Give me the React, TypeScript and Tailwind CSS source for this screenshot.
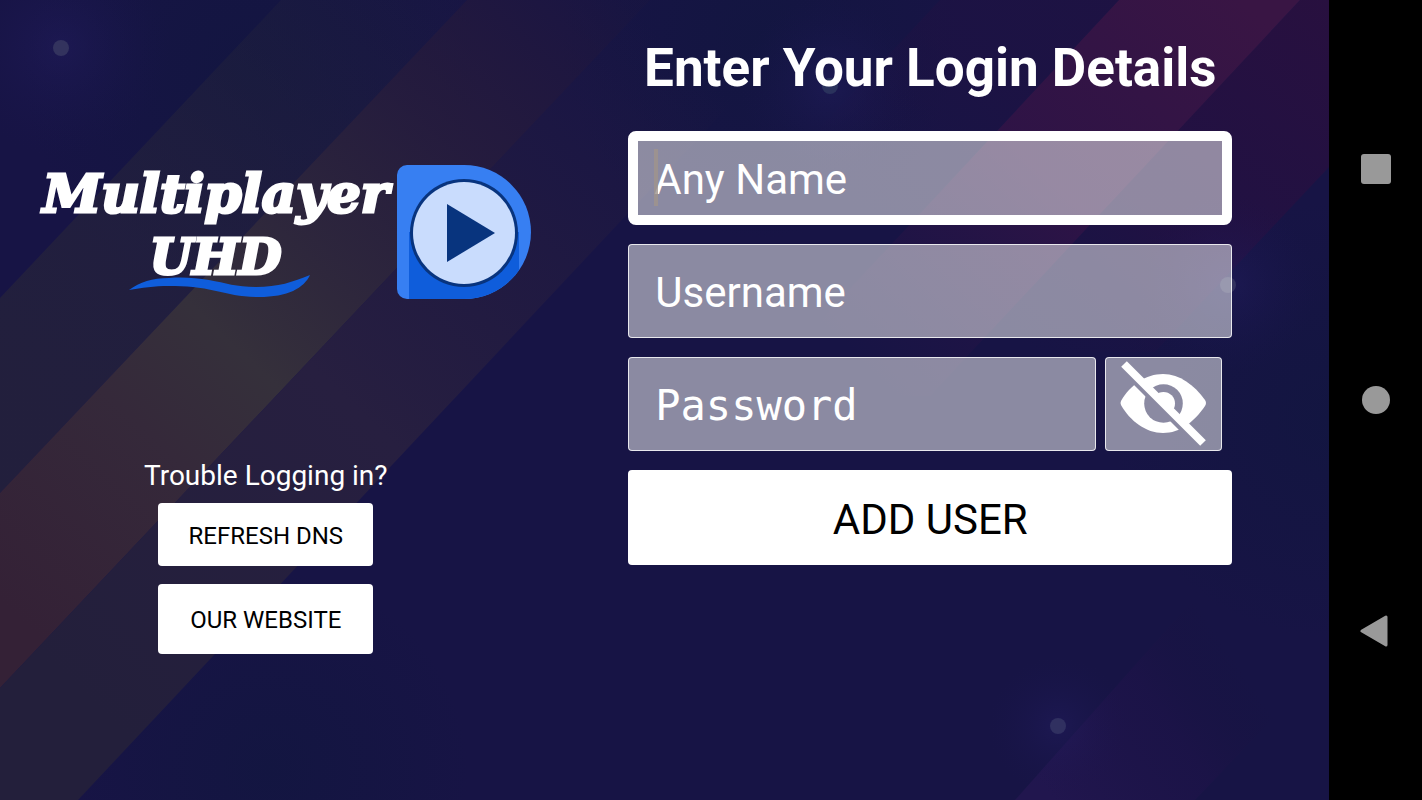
import React from "react";

const fieldClass =
  "block h-[94px] w-full rounded-[4px] border border-white/80 bg-white/50 px-[26px] pt-[3px] text-[42px] text-white outline-none placeholder:text-white placeholder:opacity-100";

function Backdrop() {
  return (
    <svg
      className="absolute inset-0 h-full w-full"
      viewBox="0 0 1329 800"
      preserveAspectRatio="none"
      aria-hidden="true"
    >
      <defs>
        <linearGradient id="outerLeft" gradientUnits="userSpaceOnUse" x1="470" y1="-60" x2="40" y2="420">
          <stop offset="0" stopColor="#2a2a38" stopOpacity="0" />
          <stop offset="0.5" stopColor="#2a2839" stopOpacity="0.4" />
          <stop offset="1" stopColor="#24213b" stopOpacity="0.85" />
        </linearGradient>
        <linearGradient id="core" gradientUnits="userSpaceOnUse" x1="590" y1="-30" x2="0" y2="600">
          <stop offset="0" stopColor="#2c1a35" stopOpacity="0.1" />
          <stop offset="0.25" stopColor="#281d3c" stopOpacity="0.8" />
          <stop offset="0.6" stopColor="#35303b" />
          <stop offset="0.74" stopColor="#35293a" />
          <stop offset="1" stopColor="#342136" />
        </linearGradient>
        <linearGradient id="outerRight" gradientUnits="userSpaceOnUse" x1="720" y1="90" x2="120" y2="730">
          <stop offset="0" stopColor="#241c40" stopOpacity="0" />
          <stop offset="0.3" stopColor="#241c40" stopOpacity="0.7" />
          <stop offset="0.55" stopColor="#271f40" />
          <stop offset="1" stopColor="#231f3b" />
        </linearGradient>
        <linearGradient id="magenta" gradientUnits="userSpaceOnUse" x1="1230" y1="-10" x2="870" y2="370">
          <stop offset="0" stopColor="#391544" />
          <stop offset="0.5" stopColor="#341346" stopOpacity="0.8" />
          <stop offset="1" stopColor="#2a1447" stopOpacity="0" />
        </linearGradient>
        <linearGradient id="plum" gradientUnits="userSpaceOnUse" x1="1329" y1="0" x2="1040" y2="360">
          <stop offset="0" stopColor="#28103f" />
          <stop offset="0.6" stopColor="#241042" stopOpacity="0.7" />
          <stop offset="1" stopColor="#1c1344" stopOpacity="0" />
        </linearGradient>
        <linearGradient id="violet" gradientUnits="userSpaceOnUse" x1="1040" y1="780" x2="1230" y2="650">
          <stop offset="0" stopColor="#21164e" />
          <stop offset="0.6" stopColor="#1e1349" stopOpacity="0.6" />
          <stop offset="1" stopColor="#18123f" stopOpacity="0" />
        </linearGradient>
        <radialGradient id="glow">
          <stop offset="0" stopColor="#27206a" stopOpacity="0.35" />
          <stop offset="1" stopColor="#1b1550" stopOpacity="0" />
        </radialGradient>
        <radialGradient id="deep">
          <stop offset="0" stopColor="#121640" stopOpacity="0.8" />
          <stop offset="1" stopColor="#121640" stopOpacity="0" />
        </radialGradient>
      </defs>
      <rect width="1329" height="800" fill="#171445" />
      <circle cx="250" cy="70" r="230" fill="url(#deep)" />
      <circle cx="760" cy="40" r="200" fill="url(#deep)" />
      <circle cx="270" cy="770" r="200" fill="url(#deep)" />
      <circle cx="1329" cy="420" r="220" fill="url(#deep)" />
      <polygon points="281,0 467,0 0,493 0,298" fill="url(#outerLeft)" />
      <polygon points="467,0 650,0 0,688 0,493" fill="url(#core)" />
      <polygon points="650,0 828,0 78,800 0,800 0,688" fill="url(#outerRight)" />
      <polygon points="940,0 1119,0 790,352 610,352" fill="url(#plum)" opacity="0.5" />
      <polygon points="1300,0 1329,0 1329,167 1155,352 970,352" fill="url(#plum)" />
      <polygon points="1119,0 1300,0 930,396 750,396" fill="url(#magenta)" />
      <polygon points="1015,800 1200,592 1329,592 1329,660 1195,800" fill="url(#violet)" />
      <circle cx="61" cy="47" r="110" fill="url(#glow)" />
      <circle cx="830" cy="86" r="90" fill="url(#glow)" />
      <circle cx="1228" cy="285" r="90" fill="url(#glow)" />
      <circle cx="1058" cy="726" r="70" fill="url(#glow)" />
      <circle cx="61" cy="48" r="8" fill="#33335e" />
      <circle cx="830" cy="86" r="8" fill="#2a325c" />
      <circle cx="1228" cy="285" r="8" fill="#33325f" />
      <circle cx="1058" cy="726" r="8" fill="#303060" />
    </svg>
  );
}

function PlayerMark() {
  return (
    <svg className="h-[136px] w-[136px] shrink-0" viewBox="0 0 136 136" aria-hidden="true">
      <defs>
        <clipPath id="badge">
          <path d="M11 1 H68 A67 67 0 0 1 68 135 H11 A10 10 0 0 1 1 125 V11 A10 10 0 0 1 11 1 Z" />
        </clipPath>
      </defs>
      <g clipPath="url(#badge)">
        <rect width="136" height="136" fill="#377ff2" />
        <path d="M13 68 H123 V136 H13 Z" fill="#0f5ddb" />
      </g>
      <circle cx="68" cy="69" r="54" fill="#08347e" />
      <circle cx="68" cy="69" r="51" fill="#c9dcfd" />
      <path d="M51 40 L99 69 L51 98 Z" fill="#08347e" />
    </svg>
  );
}

function Swoosh() {
  return (
    <svg className="h-6 w-[184px]" viewBox="0 0 184 24" aria-hidden="true">
      <path
        d="M1 16 C12 8 24 4 41 4 C56 3 68 4 81 6 C98 9 108 13 128 13 C150 13 165 8 182 1 C176 14 160 23 131 23 C112 23 102 20 88 17 C72 13 58 12 41 12 C26 12 14 14 1 16 Z"
        fill="#0f5ddb"
      />
    </svg>
  );
}

function HiddenEye() {
  return (
    <svg className="h-[88px] w-[88px]" viewBox="0 0 88 88" fill="none" aria-hidden="true">
      <defs>
        <mask id="eyeCut" maskUnits="userSpaceOnUse" x="0" y="0" width="88" height="88">
          <rect width="88" height="88" fill="white" />
          <circle cx="43.5" cy="43.5" r="19.3" fill="black" />
          <path d="M0 0 L88 88 H77 L0 11 Z" fill="black" />
        </mask>
        <clipPath id="upperHalf">
          <path d="M0 0 H88 V88 Z" />
        </clipPath>
      </defs>
      <path
        d="M1 45 Q0 43 1 41 C10 25 26 14 43 14 C60 14 74 25 85 40 Q87 43 85 46 C74 62 60 73 43 73 C26 73 10 61 1 45 Z"
        fill="white"
        mask="url(#eyeCut)"
      />
      <circle cx="43.5" cy="43.5" r="11.5" fill="white" clipPath="url(#upperHalf)" />
      <path d="M4 4 L83 83" stroke="white" strokeWidth="8" />
    </svg>
  );
}

export default function App() {
  return (
    <div className="flex min-h-screen bg-black font-[Roboto,sans-serif] text-white">
      <main className="relative flex flex-1 overflow-hidden">
        <Backdrop />

        <section className="relative flex w-2/5 flex-col items-center pt-[164px]">
          <div className="flex w-full justify-end gap-[7px]">
            <div className="flex flex-col items-center whitespace-nowrap font-['DejaVu_Serif',serif] font-bold italic">
              <span className="text-[53px] leading-[58px] [-webkit-text-stroke:3px_white]">Multiplayer</span>
              <span className="text-[49px] leading-[70px] [-webkit-text-stroke:3px_white]">UHD</span>
              <span className="-mt-[18px] ml-2 flex">
                <Swoosh />
              </span>
            </div>
            <PlayerMark />
          </div>

          <p className="mt-[160px] text-[28px] leading-8">Trouble Logging in?</p>
          <button
            type="button"
            className="mt-[11px] h-[63px] w-[215px] rounded-[4px] bg-white pt-[2px] text-[24px] text-black"
          >
            REFRESH DNS
          </button>
          <button
            type="button"
            className="mt-[18px] h-[70px] w-[215px] rounded-[4px] bg-white pt-[2px] text-[24px] text-black"
          >
            OUR WEBSITE
          </button>
        </section>

        <section className="relative flex w-3/5 flex-col items-center pt-[38px]">
          <h1 className="whitespace-nowrap text-[53px] font-bold leading-[60px]">Enter Your Login Details</h1>
          <form className="mt-[33px] flex w-full max-w-[604px] flex-col gap-[19px]" onSubmit={(e) => e.preventDefault()}>
            <div className="relative">
              <input
                type="text"
                aria-label="Any Name"
                placeholder="Any Name"
                className="block h-[94px] w-full rounded-lg border-[10px] border-white bg-white/50 bg-clip-padding px-4 pt-[3px] text-[42px] text-white outline-none placeholder:text-white placeholder:opacity-100"
              />
              <span className="absolute left-[26px] top-[18px] h-[57px] w-1 bg-[#a0948c]/80" />
            </div>
            <input type="text" aria-label="Username" placeholder="Username" className={fieldClass} />
            <div className="flex gap-[9px] pr-[10px]">
              <div className="min-w-0 flex-1">
                <input
                  type="password"
                  aria-label="Password"
                  placeholder="Password"
                  className={fieldClass + " font-['DejaVu_Sans_Mono',monospace]"}
                />
              </div>
              <button
                type="button"
                aria-label="Show password"
                className="flex h-[94px] w-[117px] shrink-0 items-center justify-center rounded-[4px] border border-white/80 bg-white/50"
              >
                <HiddenEye />
              </button>
            </div>
            <button type="submit" className="h-[95px] w-full rounded-[4px] bg-white pt-1 text-[42px] text-black">
              ADD USER
            </button>
          </form>
        </section>
      </main>

      <nav className="flex w-[93px] shrink-0 flex-col items-center justify-between py-[153px]">
        <button type="button" aria-label="Recent apps" className="flex size-8 items-center justify-center">
          <span className="size-[30px] rounded-[3px] bg-[#999999]" />
        </button>
        <button type="button" aria-label="Home" className="flex size-8 items-center justify-center">
          <span className="size-7 rounded-full bg-[#999999]" />
        </button>
        <button type="button" aria-label="Back" className="flex size-8 items-center justify-center">
          <svg className="size-8" viewBox="0 0 32 32" aria-hidden="true">
            <path d="M2 16 L26 2 V30 Z" fill="#999999" stroke="#999999" strokeWidth="3" strokeLinejoin="round" />
          </svg>
        </button>
      </nav>
    </div>
  );
}
